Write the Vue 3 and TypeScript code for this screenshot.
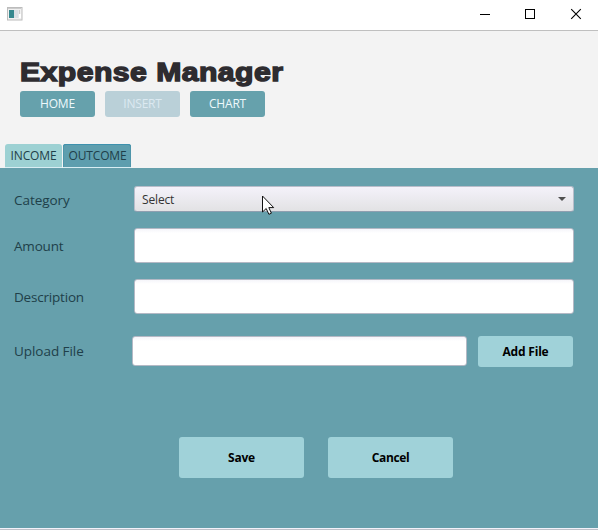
<script setup lang="ts">
import { ref } from 'vue'

const pages = ['HOME', 'INSERT', 'CHART']
const activePage = ref('INSERT')
const tab = ref('OUTCOME')
const amount = ref('')
const description = ref('')
const file = ref('')
</script>

<template>
  <div class="window">
    <div class="titlebar">
      <svg class="app-icon" width="16" height="14" viewBox="0 0 16 14">
        <rect x="0.5" y="0.5" width="14.5" height="12.5" fill="#f1f1f1" stroke="#bcbcbc" />
        <path d="M1 1.5h13" stroke="#ccc" />
        <rect x="2" y="3" width="5" height="8" fill="#35888e" />
        <rect x="7" y="3" width="4.5" height="8" fill="#d9dfe4" />
        <path d="M12.5 3v4" stroke="#ccc" />
        <rect x="12" y="7" width="2" height="4" fill="#fff" />
      </svg>
      <svg class="controls" width="104" height="12" viewBox="0 0 104 12" fill="none" stroke="#000">
        <path d="M0 6.5h10" />
        <rect x="45.5" y="1.5" width="9" height="9" />
        <path d="M91.2 1.2l9.6 9.6M100.8 1.2l-9.6 9.6" stroke-width="1.1" />
      </svg>
    </div>
    <header class="header">
      <h1 class="title">Expense Manager</h1>
      <nav class="nav">
        <button
          v-for="p in pages"
          :key="p"
          class="nav-btn"
          :class="{ current: p === activePage }"
          @click="activePage = p"
        >{{ p }}</button>
      </nav>
    </header>
    <div class="tabs">
      <button class="tab income" @click="tab = 'INCOME'">INCOME</button>
      <button class="tab outcome" @click="tab = 'OUTCOME'">OUTCOME</button>
    </div>
    <main class="panel">
      <div class="row category">
        <label class="cat-label">Category</label>
        <div class="select">
          <span>Select</span>
          <svg width="8" height="4" viewBox="0 0 8 4"><path d="M0 0h8L4 4z" fill="#505050" /></svg>
        </div>
      </div>
      <div class="row amount">
        <label class="amt-label">Amount</label>
        <input v-model="amount" class="field" />
      </div>
      <div class="row description">
        <label class="desc-label">Description</label>
        <input v-model="description" class="field" />
      </div>
      <div class="row upload">
        <label class="up-label">Upload File</label>
        <input v-model="file" class="field file" />
        <button class="action add">Add File</button>
      </div>
      <div class="actions">
        <button class="action">Save</button>
        <button class="action cancel">Cancel</button>
      </div>
    </main>
    <svg class="cursor" width="14" height="21" viewBox="0 0 14 21">
      <path d="M1.5 1v16l3.7-3.5 2.7 5.8 2.5-1.1-2.6-5.6h4.9z" fill="#fff" stroke="#111" />
    </svg>
  </div>
</template>

<style>
body { margin: 0; }
</style>

<style scoped>
.window {
  position: relative;
  box-sizing: border-box;
  width: 598px;
  height: 530px;
  display: flex;
  flex-direction: column;
  background: #f3f3f3;
  font-family: 'Open Sans', 'Noto Sans', sans-serif;
  border-bottom: 1px solid #bfc1c9;
  overflow: hidden;
}
button, input { font-family: inherit; border: 0; padding: 0; margin: 0; box-sizing: border-box; outline: 0; }
.titlebar {
  box-sizing: border-box;
  height: 31px;
  flex: none;
  display: flex;
  justify-content: space-between;
  align-items: flex-start;
  padding: 7px 14px 0 7px;
  background: #fff;
  border-bottom: 1px solid #bfbfbf;
}
.controls { margin-top: 1px; }
.header { height: 113px; flex: none; box-sizing: border-box; padding: 26px 20px 0; }
.title {
  margin: 0;
  height: 34px;
  width: max-content;
  font: bold 26px/30px 'Liberation Sans', sans-serif;
  color: #2e2c30;
  -webkit-text-stroke: 1.4px #2e2c30;
  letter-spacing: 0.4px;
  transform: scaleX(1.16);
  transform-origin: left;
}
.nav { display: flex; gap: 10px; }
.nav-btn {
  width: 75px;
  height: 26px;
  border-radius: 3px;
  background: #66a1ac;
  color: #eef9fc;
  font-size: 12px;
  line-height: 26px;
  letter-spacing: -0.2px;
}
.nav-btn.current { background: #bad0d8; color: #dce9f1; }
.tabs { display: flex; gap: 1px; height: 24px; flex: none; padding-left: 5px; }
.tab {
  height: 24px;
  border-radius: 3px 3px 0 0;
  border-bottom: 1px solid #d9eef3;
  color: #1f3f49;
  font-size: 12px;
  line-height: 24px;
  letter-spacing: -0.15px;
}
.income { width: 57px; background: #9dd1d3; }
.outcome { width: 68px; padding-left: 1px; background: #5e9eae; box-shadow: inset 0 1px #3e91ad, inset -1px 0 #4e95aa, inset 1px 0 #4e95aa; }
.panel {
  flex: 1;
  min-height: 0;
  padding: 18px 24px 0 14px;
  background: #66a0ac;
  border-bottom: 1px solid #f2f2fa;
}
.row { display: flex; align-items: center; }
label { width: 120px; flex: none; font-size: 13.5px; line-height: 20px; color: #203f49; }
.cat-label { padding-top: 2px; letter-spacing: -0.05px; }
.amt-label { padding-top: 1px; letter-spacing: -0.2px; }
.desc-label { padding-top: 1px; letter-spacing: -0.2px; }
.category { height: 26px; margin-bottom: 16px; }
.amount { height: 35px; margin-bottom: 16px; }
.description { height: 35px; margin-bottom: 22px; }
.upload { height: 31px; align-items: flex-start; }
.select {
  box-sizing: border-box;
  flex: 1;
  height: 26px;
  display: flex;
  align-items: center;
  justify-content: space-between;
  padding: 0 7px 0 7px;
  border: 1px solid #b8bdca;
  border-bottom-color: #8e9fb0;
  border-radius: 3px;
  background: linear-gradient(#f4f2fa, #e2e2e4);
  font-size: 12px;
  letter-spacing: -0.15px;
  color: #333;
}
.select svg { flex: none; }
.field {
  flex: 1;
  min-width: 0;
  height: 35px;
  border: 1px solid #b4b9c5;
  border-radius: 3px;
  background: linear-gradient(#f5f5fa, #fff 4px);
  font-size: 12px;
}
.up-label { width: 118px; line-height: 31px; letter-spacing: -0.05px; }
.file { flex: none; width: 335px; height: 30px; }
.action {
  width: 125px;
  height: 41px;
  border-radius: 3px;
  background: #a0d2d9;
  color: #000;
  font-size: 12px;
  font-weight: 700;
  letter-spacing: -0.2px;
}
.cancel { letter-spacing: -0.4px; }
.add { width: 95px; height: 31px; margin-left: 11px; }
.actions { display: flex; gap: 24px; margin: 70px 0 0 165px; }
.cursor { position: absolute; left: 261px; top: 195px; }
</style>
